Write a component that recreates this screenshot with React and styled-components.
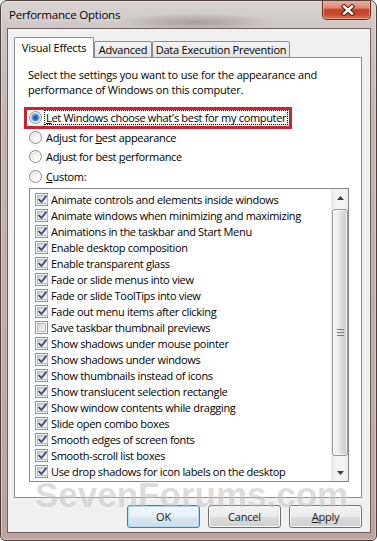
import React from 'react';
import styled, { createGlobalStyle } from 'styled-components';

const FONT = `"Open Sans", "Noto Sans", "Liberation Sans", sans-serif`;

const GlobalStyle = createGlobalStyle`
  * { box-sizing: border-box; }
  html, body { margin: 0; padding: 0; background: #ffffff; }
  body {
    font-family: ${FONT};
    font-size: 11px;
    letter-spacing: -0.32px;
    color: #000;
  }
`;

const Window = styled.div`
  position: relative;
  width: 377px;
  height: 541px;
  display: flex;
  flex-direction: column;
  padding: 0 5px 7px 6px;
  border: 1px solid #4e403d;
  border-radius: 7px 7px 5px 5px;
  background:
    radial-gradient(ellipse 75px 9px at 195px 21px, rgba(60, 48, 48, 0.28), rgba(60, 48, 48, 0) 100%),
    linear-gradient(180deg, #d8d3d2 0px, #ccc5c4 28px, #c4b4b1 120px, #c0aaa6 400px, #bca4a0 100%);
  box-shadow: inset 0 0 0 1px rgba(255, 255, 255, 0.35);
  overflow: hidden;
`;

const TitleBar = styled.div`
  flex: none;
  height: 27px;
  display: flex;
  justify-content: space-between;
  align-items: flex-start;
  padding-left: 2px;
`;

const Title = styled.div`
  margin-top: 6px;
  font-size: 11.5px;
  line-height: 16px;
  letter-spacing: -0.2px;
  color: #000;
  text-shadow: 0 0 8px rgba(255, 255, 255, 0.9);
`;

const CloseButton = styled.div`
  width: 49px;
  height: 20px;
  margin-top: -1px;
  display: flex;
  align-items: center;
  justify-content: center;
  padding-left: 2px;
  border: 1px solid #6b2a20;
  border-top: none;
  border-radius: 0 0 5px 5px;
  background: linear-gradient(180deg, #eab2a4 0%, #de8571 42%, #c8442c 50%, #c64a2c 78%, #dd7b50 100%);
  box-shadow: inset 0 0 0 1px rgba(255, 220, 210, 0.45);
`;

const Client = styled.div`
  flex: 1;
  display: flex;
  flex-direction: column;
  background: #f0f0f0;
  border: 1px solid #6f605d;
  padding: 8px 8px 4px 6px;
`;

const TabStrip = styled.div`
  flex: none;
  display: flex;
  align-items: flex-end;
  height: 21px;
  margin-bottom: -1px;
`;

const Tab = styled.div`
  width: ${(p) => p.$w}px;
  height: ${(p) => (p.$active ? 21 : 17)}px;
  display: flex;
  align-items: center;
  justify-content: center;
  border: 1px solid #898c95;
  border-bottom: ${(p) => (p.$active ? 'none' : '1px solid #898c95')};
  border-radius: 2px 2px 0 0;
  background: ${(p) => (p.$active ? '#ffffff' : 'linear-gradient(180deg, #f5f5f5 0%, #ebebeb 50%, #e2e2e2 100%)')};
  position: ${(p) => (p.$active ? 'relative' : 'static')};
  z-index: ${(p) => (p.$active ? 1 : 'auto')};
  padding-bottom: ${(p) => (p.$active ? 1 : 0)}px;
  letter-spacing: -0.2px;
  white-space: nowrap;
`;

const Panel = styled.div`
  flex: none;
  height: 441px;
  background: #ffffff;
  border: 1px solid #898c95;
  padding: 9px 12px 0 13px;
  display: flex;
  flex-direction: column;
  align-items: flex-start;
`;

const Intro = styled.p`
  margin: 0 0 11px;
  line-height: 15px;
  letter-spacing: -0.2px;
`;

const ChoiceRow = styled.div`
  height: 19.5px;
  display: flex;
  align-items: center;
  margin-left: -1px;
`;

const Choice = styled.label`
  display: inline-flex;
  align-items: center;
  height: 16px;
  padding: 0 1px 0 2px;
  outline: ${(p) => (p.$marked ? '3px solid #d3202e' : 'none')};
  white-space: nowrap;
`;

const Radio = styled.span`
  flex: none;
  width: 13px;
  height: 13px;
  margin-right: 2px;
  border-radius: 50%;
  border: 1px solid #8b8b8b;
  background: radial-gradient(circle at 65% 70%, #ffffff 0%, #f1f1f1 45%, #d4d4d4 100%);
  box-shadow: inset 0 0 0 1px rgba(255, 255, 255, 0.7);
  display: flex;
  align-items: center;
  justify-content: center;

  &::after {
    content: '';
    display: ${(p) => (p.$checked ? 'block' : 'none')};
    width: 7px;
    height: 7px;
    border-radius: 50%;
    background: radial-gradient(circle at 50% 55%, #0f4a95 0%, #2a7fd0 45%, #7cc8f4 85%, #b6e3fa 100%);
    box-shadow: 0 0 0 0.5px #3a78b8;
  }
`;

const ChoiceText = styled.span`
  line-height: 13px;
  padding: 0 1px;
  border: 1px dotted ${(p) => (p.$focus ? '#000' : 'transparent')};
`;

const Key = styled.span`
  text-decoration: underline;
`;

const ListBox = styled.div`
  flex: none;
  width: 320px;
  height: 294px;
  margin: 2px 0 0 1px;
  border: 1px solid #828790;
  display: flex;
  background: #ffffff;
`;

const Items = styled.div`
  flex: 1;
  padding: 2px 0;
  overflow: hidden;
`;

const Item = styled.div`
  height: 16px;
  display: flex;
  align-items: center;
  padding-left: 5px;
  white-space: nowrap;
`;

const CheckBox = styled.span`
  flex: none;
  width: 13px;
  height: 13px;
  margin-right: 3px;
  border: 1px solid #8e8f8f;
  background: #ffffff;
  padding: 1px;
  display: flex;
`;

const CheckInner = styled.span`
  flex: 1;
  display: flex;
  align-items: center;
  justify-content: center;
  border: 1px solid #b4b8bf;
  background: linear-gradient(135deg, #cdd1d7 0%, #e4e7ea 50%, #f8f8f8 100%);
`;

const ScrollBar = styled.div`
  flex: none;
  width: 17px;
  display: flex;
  flex-direction: column;
  background: linear-gradient(90deg, #e4e4e4 0%, #f4f4f4 20%, #f4f4f4 80%, #e8e8e8 100%);
  border-left: 1px solid #ececec;
`;

const ArrowButton = styled.div`
  flex: none;
  height: 17px;
  display: flex;
  align-items: center;
  justify-content: center;
`;

const Track = styled.div`
  flex: 1;
  display: flex;
  flex-direction: column;
  padding: 3px 0 8px;
`;

const Thumb = styled.div`
  flex: 1;
  border: 1px solid #979797;
  border-radius: 3px;
  background: linear-gradient(90deg, #f6f6f6 0%, #ececec 40%, #dadada 60%, #cdcdcd 100%);
  box-shadow: inset 0 0 0 1px rgba(255, 255, 255, 0.7);
  display: flex;
  align-items: center;
  justify-content: center;
`;

const ButtonRow = styled.div`
  flex: none;
  display: flex;
  justify-content: flex-end;
  gap: 8px;
  margin-top: 7px;
`;

const Button = styled.div`
  width: 73px;
  height: 23px;
  display: flex;
  align-items: center;
  justify-content: center;
  border-radius: 3px;
  border: 1px solid ${(p) => (p.$default ? '#3c7fb1' : '#707070')};
  background: ${(p) =>
    p.$default
      ? 'linear-gradient(180deg, #f0f7fc 0%, #e6f0f7 50%, #d8e6f0 51%, #cfe0ec 100%)'
      : 'linear-gradient(180deg, #f2f2f2 0%, #ebebeb 50%, #dddddd 51%, #cfcfcf 100%)'};
  box-shadow: inset 0 0 0 1px ${(p) => (p.$default ? '#aedcf5' : '#fcfcfc')};
  color: #1a1a1a;
  letter-spacing: -0.2px;
`;

const Watermark = styled.div`
  position: absolute;
  left: 34px;
  top: 476px;
  font-family: "Liberation Sans", Arial, sans-serif;
  font-weight: bold;
  font-size: 35px;
  line-height: 35px;
  letter-spacing: 0;
  color: rgba(120, 120, 120, 0.26);
  text-shadow: 0 0 3px rgba(255, 255, 255, 0.6);
  white-space: nowrap;
  pointer-events: none;
`;

const effects = [
  ['Animate controls and elements inside windows', true],
  ['Animate windows when minimizing and maximizing', true],
  ['Animations in the taskbar and Start Menu', true],
  ['Enable desktop composition', true],
  ['Enable transparent glass', true],
  ['Fade or slide menus into view', true],
  ['Fade or slide ToolTips into view', true],
  ['Fade out menu items after clicking', true],
  ['Save taskbar thumbnail previews', false],
  ['Show shadows under mouse pointer', true],
  ['Show shadows under windows', true],
  ['Show thumbnails instead of icons', true],
  ['Show translucent selection rectangle', true],
  ['Show window contents while dragging', true],
  ['Slide open combo boxes', true],
  ['Smooth edges of screen fonts', true],
  ['Smooth-scroll list boxes', true],
  ['Use drop shadows for icon labels on the desktop', true],
];

const choices = [
  { pre: '', key: 'L', post: "et Windows choose what's best for my computer", checked: true },
  { pre: 'Adjust for ', key: 'b', post: 'est appearance' },
  { pre: 'Adjust for best ', key: 'p', post: 'erformance' },
  { pre: '', key: 'C', post: 'ustom:' },
];

const CheckMark = () => (
  <svg width="9" height="9" viewBox="0 0 9 9">
    <path d="M1.2 4.6 L3.5 7 L7.9 1.4" fill="none" stroke="#354c8a" strokeWidth="1.8" strokeLinecap="round" strokeLinejoin="round" />
  </svg>
);

const CloseGlyph = () => (
  <svg width="14" height="12" viewBox="0 0 14 12">
    <path d="M3 2.5 L11 9.5 M11 2.5 L3 9.5" fill="none" stroke="#4a1c14" strokeWidth="4.4" strokeLinecap="square" />
    <path d="M3 2.5 L11 9.5 M11 2.5 L3 9.5" fill="none" stroke="#ffffff" strokeWidth="2.4" strokeLinecap="square" />
  </svg>
);

const Arrow = ({ down }) => (
  <svg width="7" height="4" viewBox="0 0 7 4">
    <path d={down ? 'M0 0 L7 0 L3.5 4 Z' : 'M0 4 L7 4 L3.5 0 Z'} fill="#3b3b3b" />
  </svg>
);

const Grip = () => (
  <svg width="7" height="7" viewBox="0 0 7 7">
    <path d="M0 0.5 H7 M0 3.5 H7 M0 6.5 H7" stroke="#7a7a7a" strokeWidth="1" />
  </svg>
);

export default function App() {
  return (
    <>
      <GlobalStyle />
      <Window>
        <TitleBar>
          <Title>Performance Options</Title>
          <CloseButton>
            <CloseGlyph />
          </CloseButton>
        </TitleBar>
        <Client>
          <TabStrip>
            <Tab $active $w={80}>Visual Effects</Tab>
            <Tab $w={58}>Advanced</Tab>
            <Tab $w={138}>Data Execution Prevention</Tab>
          </TabStrip>
          <Panel>
            <Intro>
              Select the settings you want to use for the appearance and
              <br />
              performance of Windows on this computer.
            </Intro>
            {choices.map((c, i) => (
              <ChoiceRow key={i}>
                <Choice $marked={i === 0}>
                  <Radio $checked={!!c.checked} />
                  <ChoiceText $focus={i === 0}>
                    {c.pre}
                    <Key>{c.key}</Key>
                    {c.post}
                  </ChoiceText>
                </Choice>
              </ChoiceRow>
            ))}
            <ListBox>
              <Items>
                {effects.map(([label, on]) => (
                  <Item key={label}>
                    <CheckBox>
                      <CheckInner>{on ? <CheckMark /> : null}</CheckInner>
                    </CheckBox>
                    {label}
                  </Item>
                ))}
              </Items>
              <ScrollBar>
                <ArrowButton>
                  <Arrow />
                </ArrowButton>
                <Track>
                  <Thumb>
                    <Grip />
                  </Thumb>
                </Track>
                <ArrowButton>
                  <Arrow down />
                </ArrowButton>
              </ScrollBar>
            </ListBox>
          </Panel>
          <ButtonRow>
            <Button $default>OK</Button>
            <Button>Cancel</Button>
            <Button>
              <span>
                <Key>A</Key>pply
              </span>
            </Button>
          </ButtonRow>
        </Client>
        <Watermark>SevenForums.com</Watermark>
      </Window>
    </>
  );
}
